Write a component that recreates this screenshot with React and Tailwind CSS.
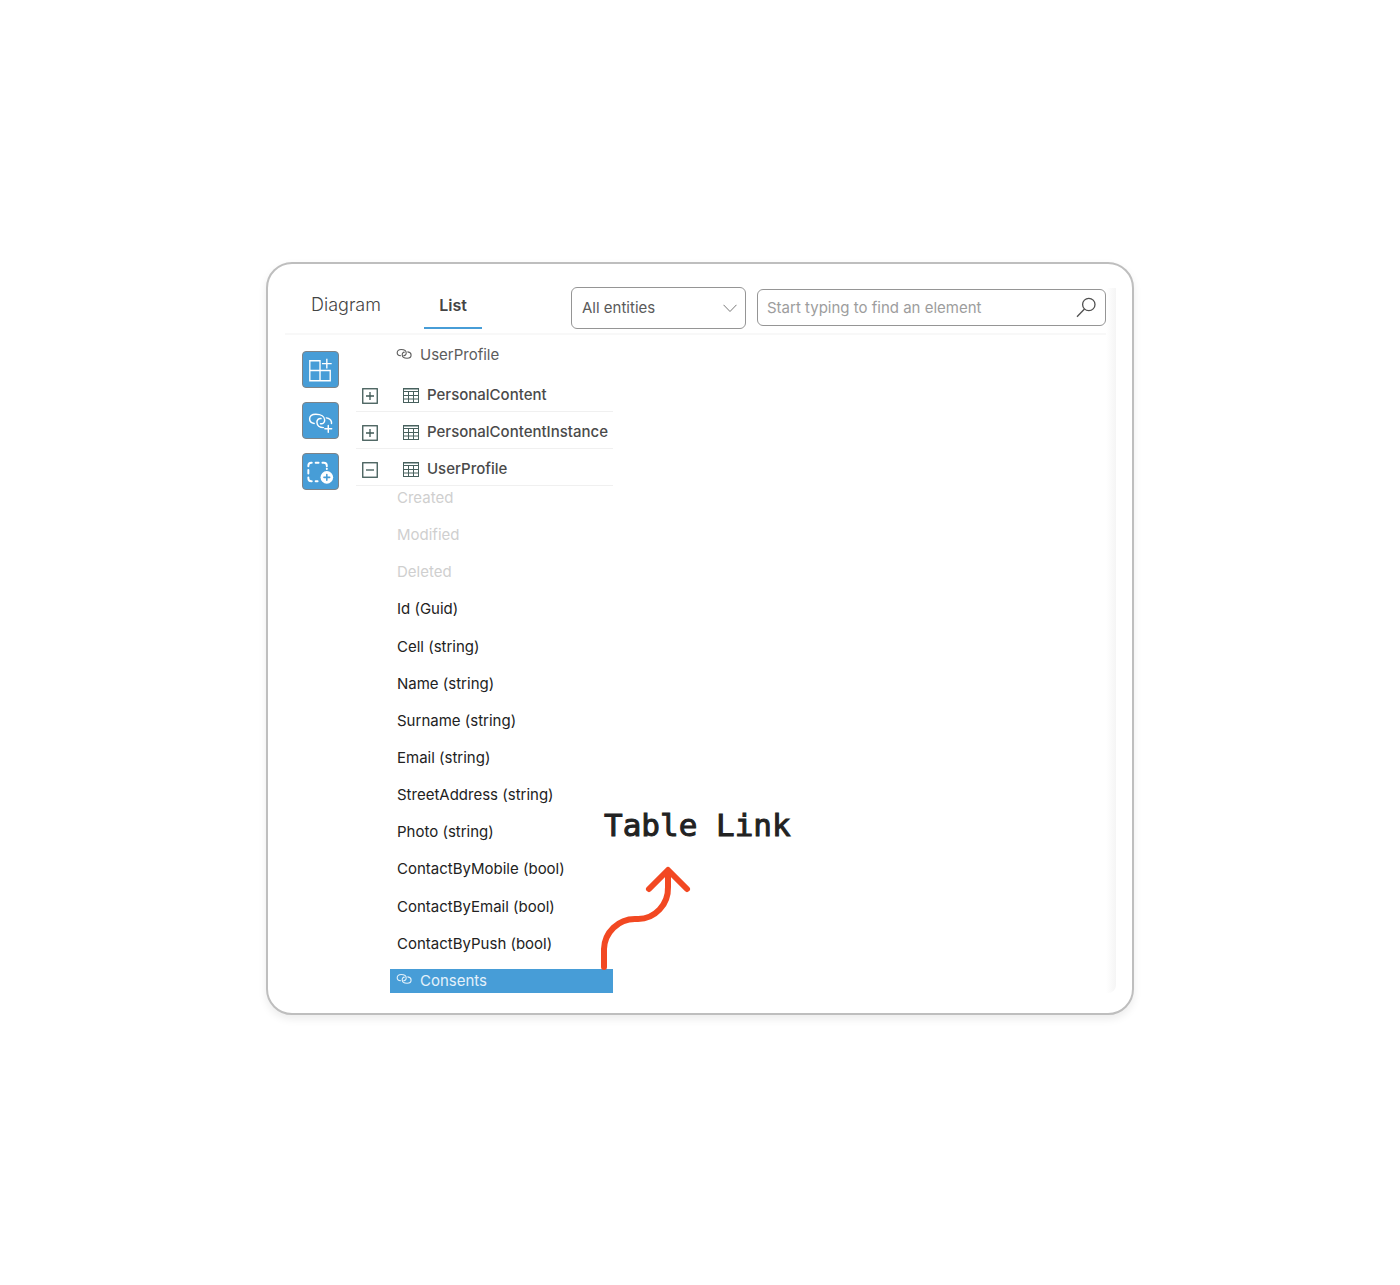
import React from "react";

const tables = [
  { name: "PersonalContent", open: false },
  { name: "PersonalContentInstance", open: false },
  { name: "UserProfile", open: true },
];

const fields = [
  { name: "Created", system: true },
  { name: "Modified", system: true },
  { name: "Deleted", system: true },
  { name: "Id (Guid)" },
  { name: "Cell (string)" },
  { name: "Name (string)" },
  { name: "Surname (string)" },
  { name: "Email (string)" },
  { name: "StreetAddress (string)" },
  { name: "Photo (string)" },
  { name: "ContactByMobile (bool)" },
  { name: "ContactByEmail (bool)" },
  { name: "ContactByPush (bool)" },
];

function LinkIcon() {
  return (
    <svg width="16" height="15" viewBox="0 0 16 15" fill="none" stroke="currentColor" strokeWidth="1.100" strokeLinecap="round" aria-hidden="true">
      <path d="M4.600 7.800C2.400 7.500 1.200 6.300 1.200 4.700C1.200 2.700 2.700 1.500 5.200 1.500C8.200 1.500 10.200 2.900 10.200 4.900C10.200 6.600 9.200 7.800 7.800 7.600" />
      <path d="M11.800 3.900C14 4.200 15.100 5.400 15.100 6.900C15.100 8.900 13.600 10.200 11.100 10.200C8.200 10.200 6.200 8.700 6.200 6.700C6.200 5.100 7.200 4 8.400 4.200" />
    </svg>
  );
}

function TableIcon() {
  return (
    <svg width="16" height="15" viewBox="0 0 16 15" fill="none" stroke="#47605d" aria-hidden="true">
      <rect x=".5" y=".5" width="15" height="14" />
      <path d="M1 1.500h14" stroke="#9fb0ae" />
      <path d="M1 3.500h14M1 7.500h14M1 11h14M5.500 3.500v11M10.500 3.500v11" />
    </svg>
  );
}

function ToggleIcon({ open }) {
  return (
    <svg width="16" height="16" viewBox="0 0 16 16" fill="none" stroke="#3f5956" aria-hidden="true">
      <rect x=".75" y=".75" width="14.500" height="14.500" strokeWidth="1.300" />
      <path d={open ? "M4 8h8" : "M4 8h8M8 4v8"} strokeWidth="1.300" />
    </svg>
  );
}

function AddTableIcon() {
  return (
    <svg width="36" height="36" viewBox="0 0 36 36" fill="none" stroke="#fff" strokeWidth="1.400" aria-hidden="true">
      <path d="M7 8.500h10.500v20.500H7zM7 18.500h21v10.500H17.500M24.500 6.500v10M19.500 11.500h10" />
    </svg>
  );
}

function AddLinkIcon() {
  return (
    <svg width="36" height="36" viewBox="0 0 36 36" fill="none" stroke="#fff" strokeWidth="1.500" strokeLinecap="round" aria-hidden="true">
      <path d="M11.500 20.500C8.500 20 6.800 18.200 6.800 16C6.800 13 9.300 11 13.200 11C18.500 11 22.300 13.400 22.300 17C22.300 19.800 20.500 21.200 18 20.800" />
      <path d="M18.500 15.500C16 15.200 14.300 16.700 14.300 19C14.300 22.500 17.200 24.800 21 24.800" />
      <path d="M24 14.800C26.800 15.200 28.800 16.800 29.300 19V20.500" />
      <path d="M26 22.500v7M22.500 26h7" />
    </svg>
  );
}

function AddGroupIcon() {
  return (
    <svg width="36" height="36" viewBox="0 0 36 36" fill="none" stroke="#fff" strokeWidth="2" strokeLinecap="round" aria-hidden="true">
      <path d="M5.500 12V11.500a3 3 0 0 1 3-3h.5M13 8.500h3M20 8.500h1.500a3 3 0 0 1 3 3v.5M24.500 14.500v.5M5.500 16v3.500M5.500 23.500v1a3 3 0 0 0 3 3h.5M13 27.500h2" />
      <circle cx="24.500" cy="23.500" r="6.500" fill="#fff" stroke="none" />
      <path d="M24.500 20.500v6M21.500 23.500h6" stroke="#479dd7" strokeWidth="1.600" />
    </svg>
  );
}

const tools = [
  { label: "Add table", Icon: AddTableIcon },
  { label: "Add link", Icon: AddLinkIcon },
  { label: "Add group", Icon: AddGroupIcon },
];

function Header() {
  return (
    <header className="flex h-[71px] items-center border-b-2 border-[#f8f8f8] pt-[18px]">
      <nav className="flex gap-7 self-stretch pl-[11px]" role="tablist">
        <button role="tab" aria-selected="false" className="h-[47px] w-[100px] border-b-2 border-transparent text-[18px] font-light text-[#444]">
          Diagram
        </button>
        <button role="tab" aria-selected="true" className="h-[47px] w-[58px] border-b-2 border-[#479dd7] text-[16px] font-semibold text-[#444]">
          List
        </button>
      </nav>
      <div className="ml-[89px] flex flex-1 items-center gap-[11px]">
        <div className="relative">
          <select aria-label="Entities" className="h-[42px] w-[175px] appearance-none rounded-[6px] border border-[#959595] bg-white px-[10px] pt-px text-[15px] text-[#5a5a5a]">
            <option>All entities</option>
          </select>
          <svg className="pointer-events-none absolute top-[17px] right-[9px]" width="14" height="9" viewBox="0 0 14 9" fill="none" stroke="#777" aria-hidden="true">
            <path d="M.5 .8L7 7.500L13.500 .8" />
          </svg>
        </div>
        <div className="relative flex-1">
          <input aria-label="Find an element" type="text" placeholder="Start typing to find an element" className="h-[37px] w-full rounded-[6px] border border-[#959595] bg-white pr-10 pl-[9px] text-[15px] placeholder:text-[#9d9d9d]" />
          <svg className="absolute top-2 right-[10px]" width="20" height="21" viewBox="0 0 20 21" fill="none" stroke="#505050" strokeWidth="1.300" aria-hidden="true">
            <circle cx="12.800" cy="7.500" r="6.200" />
            <path d="M8.500 12L1 19.800" />
          </svg>
        </div>
      </div>
    </header>
  );
}

function Callout() {
  return (
    <div className="absolute bottom-[22px] left-[208px] flex w-max flex-col gap-[22px]">
      <p className="pl-[6px] font-['DejaVu_Sans_Mono','Liberation_Mono',monospace] text-[31px] leading-9 text-[#222] [-webkit-text-stroke:1px_#222]">Table Link</p>
      <svg width="96" height="106" viewBox="0 0 96 106" fill="none" stroke="#f24822" strokeWidth="6" strokeLinecap="round" strokeLinejoin="round" aria-hidden="true">
        <path d="M6 102V84A31 31 0 0 1 37 54H40A30 31 0 0 0 70 22V6M51 24L70 5L89 24" />
      </svg>
    </div>
  );
}

export default function App() {
  return (
    <main className="min-h-screen bg-white px-6 py-[262px] font-['Inter','Open_Sans',sans-serif]">
      <section className="mx-auto flex max-w-[868px] rounded-[26px] border-2 border-[#bebebe] bg-white pr-4 pb-5 pl-[17px] shadow-[0_4px_8px_rgba(0,0,0,0.08)]">
        <div className="min-w-0 flex-1">
          <Header />
          <div className="flex">
            <div className="flex flex-col gap-[14px] pt-4 pl-[17px]">
              {tools.map(({ label, Icon }) => (
                <button key={label} aria-label={label} className="flex size-[37px] items-center justify-center rounded-[4px] border border-[#7d8388] bg-[#479dd7]">
                  <Icon />
                </button>
              ))}
            </div>
            <div className="ml-[17px] w-[257px] text-[15px]">
              <div className="flex h-10 items-center gap-2 pl-[40px] text-[#5c5c5c]">
                <LinkIcon />
                <span>UserProfile</span>
              </div>
              <ul>
                {tables.map((table) => (
                  <li key={table.name} className="flex h-[37px] items-center border-b border-[#f0f0f0] pt-[5px] pl-[6px] font-medium text-[#4a4a4a]">
                    <button aria-label={(table.open ? "Collapse " : "Expand ") + table.name} aria-expanded={table.open}>
                      <ToggleIcon open={table.open} />
                    </button>
                    <span className="ml-[25px] flex items-center gap-2">
                      <TableIcon />
                      {table.name}
                    </span>
                  </li>
                ))}
              </ul>
              <ul className="ml-[34px] flex min-h-[507px] flex-col justify-between">
                {fields.map((field) => (
                  <li key={field.name} className={field.system ? "pl-[7px] leading-6 text-[#cfcfcf]" : "pl-[7px] leading-6 text-[#222]"}>
                    {field.name}
                  </li>
                ))}
                <li className="relative flex h-6 items-center gap-2 bg-[#479dd7] pl-[6px] text-[#e4f1fa]">
                  <LinkIcon />
                  <span>Consents</span>
                  <Callout />
                </li>
              </ul>
            </div>
          </div>
        </div>
        <div className="mt-6 w-[10px] rounded-br-lg bg-linear-to-r from-white to-[#f5f5f5]" />
      </section>
    </main>
  );
}
